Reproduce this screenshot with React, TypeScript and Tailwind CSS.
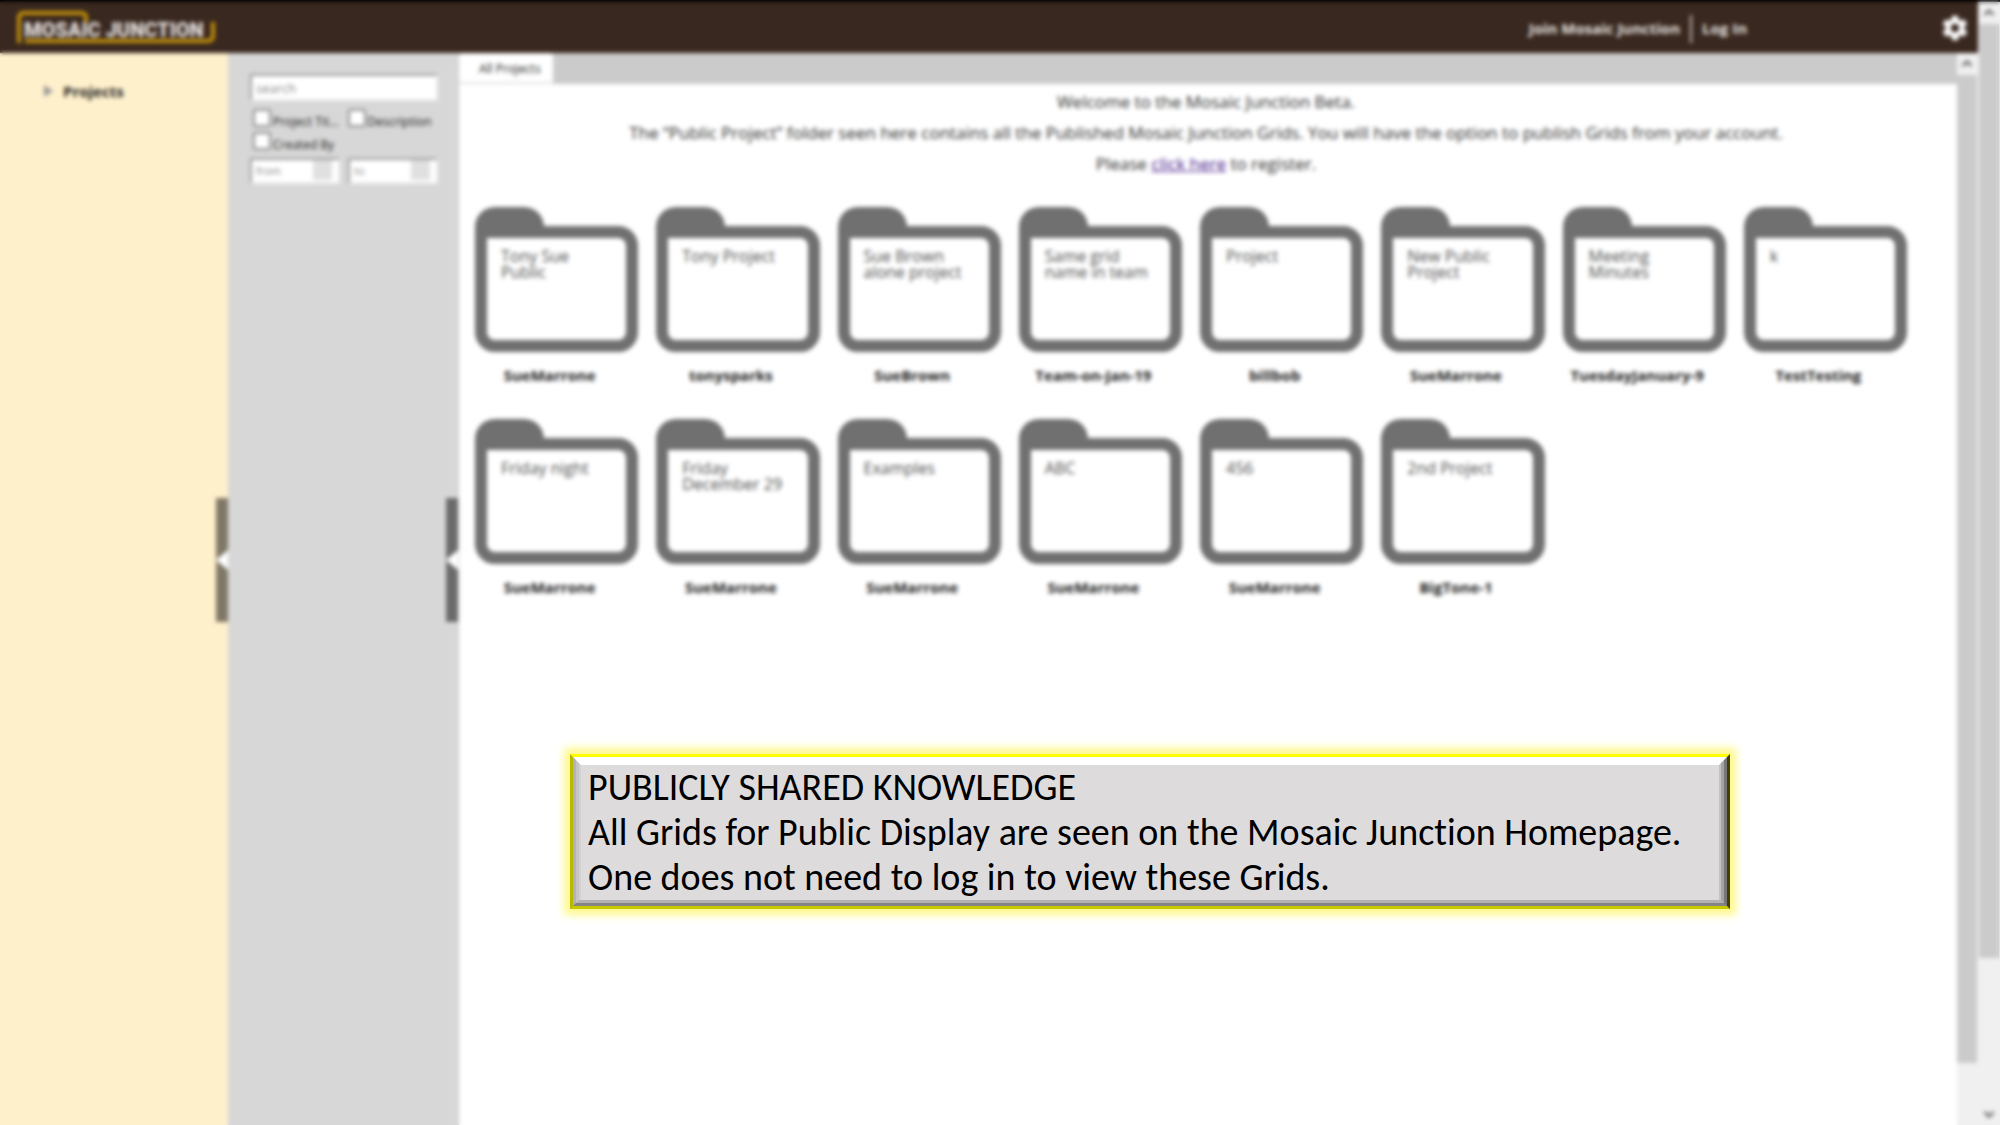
import { IoMdSettings } from 'react-icons/io';

type Project = { title: string; owner: string };

const projects: Project[] = [
  { title: 'Tony Sue Public', owner: 'SueMarrone' },
  { title: 'Tony Project', owner: 'tonysparks' },
  { title: 'Sue Brown alone project', owner: 'SueBrown' },
  { title: 'Same grid name in team', owner: 'Team-on-Jan-19' },
  { title: 'Project', owner: 'billbob' },
  { title: 'New Public Project', owner: 'SueMarrone' },
  { title: 'Meeting Minutes', owner: 'TuesdayJanuary-9' },
  { title: 'k', owner: 'TestTesting' },
  { title: 'Friday night', owner: 'SueMarrone' },
  { title: 'Friday December 29', owner: 'SueMarrone' },
  { title: 'Examples', owner: 'SueMarrone' },
  { title: 'ABC', owner: 'SueMarrone' },
  { title: '456', owner: 'SueMarrone' },
  { title: '2nd Project', owner: 'BigTone-1' },
];

function Logo() {
  return (
    <a href="#home" aria-label="Mosaic Junction" className="ml-4 block">
      <svg width="200" height="36" viewBox="0 0 200 36" fill="none">
        <path d="M3 33V8Q3 3 8 3H65Q70 3 70 8V12" stroke="#c4920a" strokeWidth="4" />
        <path d="M9 31H191Q197 31 197 26V12" stroke="#c4920a" strokeWidth="4" />
        <text x="8" y="27" fontFamily="Roboto, sans-serif" fontWeight="900" fontSize="20" fill="#e2dfdd">
          MOSAIC JUNCTION
        </text>
      </svg>
    </a>
  );
}

function Header() {
  return (
    <header className="flex h-[53px] items-center border-t-2 border-black bg-[#39281f] text-[15px] font-bold text-[#e8e5e3]">
      <Logo />
      <nav className="mr-[193px] ml-auto flex items-center gap-2.5 pt-0.5">
        <a href="#join">Join Mosaic Junction</a>
        <span className="h-7 w-0.5 bg-[#c5beba]" />
        <a href="#login">Log In</a>
      </nav>
      <button aria-label="Settings" className="mr-2 text-white">
        <IoMdSettings size={30} />
      </button>
    </header>
  );
}

function Handle({ label }: { label: string }) {
  return (
    <button aria-label={label} className="mt-[445px] flex h-[124px] w-3 shrink-0 items-center bg-black/50">
      <svg width="12" height="20" viewBox="0 0 12 20">
        <path d="M0 10L12 0V20Z" fill="#fff" />
      </svg>
    </button>
  );
}

function Check({ label }: { label: string }) {
  return (
    <label className="flex h-[23px] items-start gap-0.5">
      <input
        type="checkbox"
        className="size-[18px] shrink-0 appearance-none rounded-xs border-2 border-[#8c8c8c] bg-white"
      />
      <span className="pt-1 text-xs leading-[18px] whitespace-nowrap">{label}</span>
    </label>
  );
}

function DateBox({ label }: { label: string }) {
  return (
    <div className="flex h-[26px] min-w-0 border-2 border-t-[#9a9a9a] border-r-[#eeeeee] border-b-[#eeeeee] border-l-[#9a9a9a] bg-white">
      <input
        aria-label={label}
        placeholder={label}
        className="w-full min-w-0 flex-1 px-1 text-[11px] placeholder:text-[#888]"
      />
      <button aria-label={`Pick ${label} date`} className="mr-1.5 h-5 w-[19px] shrink-0 bg-[#e0e0e0]" />
    </div>
  );
}

function Filters() {
  return (
    <form className="flex flex-1 flex-col pt-[21px] pr-2 pl-[22px] text-[#222]">
      <input
        aria-label="search"
        placeholder="search"
        className="h-[27px] w-full border-2 border-t-[#9a9a9a] border-r-[#eeeeee] border-b-[#eeeeee] border-l-[#9a9a9a] bg-white px-1 text-[13px] placeholder:text-[#888]"
      />
      <div className="mt-2 grid grid-cols-2 gap-x-1 pl-[3px]">
        <Check label="Project Tit..." />
        <Check label="Description" />
        <Check label="Created By" />
      </div>
      <div className="mt-[3px] grid grid-cols-2 gap-x-2">
        <DateBox label="from" />
        <DateBox label="to" />
      </div>
    </form>
  );
}

function Folder({ title, owner }: Project) {
  return (
    <button className="flex h-[212px] flex-col items-stretch text-left">
      <span className="-mb-3 h-[31px] w-[69px] rounded-t-[20px] bg-[#707070]" />
      <span className="h-[126px] rounded-[20px] rounded-tl-xl border-12 border-[#707070] bg-white px-3.5 pt-2.5 text-base leading-4 text-[#505050]">
        {title}
      </span>
      <span className="mt-[11px] pr-3.5 text-center text-[15px] leading-6 font-bold whitespace-nowrap text-[#222]">
        {owner}
      </span>
    </button>
  );
}

function Arrow({ down = false }: { down?: boolean }) {
  return (
    <svg width="20" height="22" viewBox="0 0 20 22" fill="none" className={down ? 'rotate-180' : ''}>
      <path d="M5.500 13L10 8.500L14.500 13" stroke="#777" strokeWidth="3" />
    </svg>
  );
}

function Main() {
  return (
    <main className="flex min-w-0 flex-1 flex-col bg-white">
      <div className="flex h-[31px] bg-[#cbcbcb]">
        <button className="rounded-t-sm border-b-2 border-[#e4e4e4] bg-white pt-0.5 pr-3 pl-5 text-xs text-[#222]">
          All Projects
        </button>
      </div>
      <div className="pt-[2px] pr-1 text-center text-[17px] leading-[31px] text-[#303030]">
        <p>Welcome to the Mosaic Junction Beta.</p>
        <p>
          The “Public Project” folder seen here contains all the Published Mosaic Junction Grids. You will have the
          option to publish Grids from your account.
        </p>
        <p>
          Please{' '}
          <a href="#register" className="text-[#4a1a8c] underline">
            click here
          </a>{' '}
          to register.
        </p>
      </div>
      <div className="mt-7 grid grid-cols-8 gap-x-[18px] pr-[50px] pl-4">
        {projects.map((p, i) => (
          <Folder key={i} {...p} />
        ))}
      </div>
    </main>
  );
}

function Callout() {
  return (
    <aside className="absolute top-[754px] left-[28.5%] w-[58%] border-3 border-t-[#ffff00] border-r-[#3f3f00] border-b-[#c9c900] border-l-[#b8b800] shadow-[0_0_8px_6px_#fff98c]">
      <div className="border-3 border-t-white border-r-[#777] border-b-[#858384] border-l-[#b4b2b3]">
        <div className="border-3 border-t-white border-r-[#a5a3a4] border-b-[#b3b1b2] border-l-[#c6c4c5]">
          <div className="border-2 border-t-white border-r-[#c4c2c3] border-b-0 border-l-[#d3d1d2] bg-[#dddbdc] pl-[7px] font-['Carlito','Calibri','Lato',sans-serif] text-[38px] leading-[45px] text-black [font-variant-ligatures:none]">
            <p>PUBLICLY SHARED KNOWLEDGE</p>
            <p>All Grids for Public Display are seen on the Mosaic Junction Homepage.</p>
            <p>One does not need to log in to view these Grids.</p>
          </div>
        </div>
      </div>
    </aside>
  );
}

export default function App() {
  return (
    <div className="relative min-h-screen overflow-hidden bg-white font-['Open_Sans',sans-serif]">
      <div className="flex min-h-screen">
        <div className="flex min-w-0 flex-1 flex-col">
          <Header />
          <div className="flex flex-1">
            <nav className="flex w-[228px] shrink-0 items-start bg-[#fff0cc]">
              <a href="#projects" className="mt-[27px] ml-11 flex flex-1 items-center gap-2.5 text-[15px] font-bold text-[#222]">
                <svg width="9" height="12" viewBox="0 0 9 12">
                  <path d="M0 0L9 6L0 12Z" fill="#999" />
                </svg>
                Projects
              </a>
              <Handle label="Collapse projects" />
            </nav>
            <section className="flex w-[231px] shrink-0 items-start border-r border-[#cbcbcb] bg-[#d7d7d7]">
              <Filters />
              <Handle label="Collapse filters" />
            </section>
            <Main />
            <div aria-hidden="true" className="flex w-[21px] flex-col bg-[#f0f0f0]">
              <Arrow />
              <div className="mr-px basis-[988px] bg-[#cbcbcb]" />
            </div>
          </div>
        </div>
        <div aria-hidden="true" className="flex w-[22px] flex-col items-center border-t-2 border-black bg-[#f0f0f0]">
          <Arrow />
          <div className="w-5 basis-[934px] bg-[#cbcbcb]" />
          <div className="mt-auto">
            <Arrow down />
          </div>
        </div>
      </div>
      <div aria-hidden="true" className="pointer-events-none absolute inset-0 backdrop-blur-[2px]" />
      <Callout />
    </div>
  );
}
